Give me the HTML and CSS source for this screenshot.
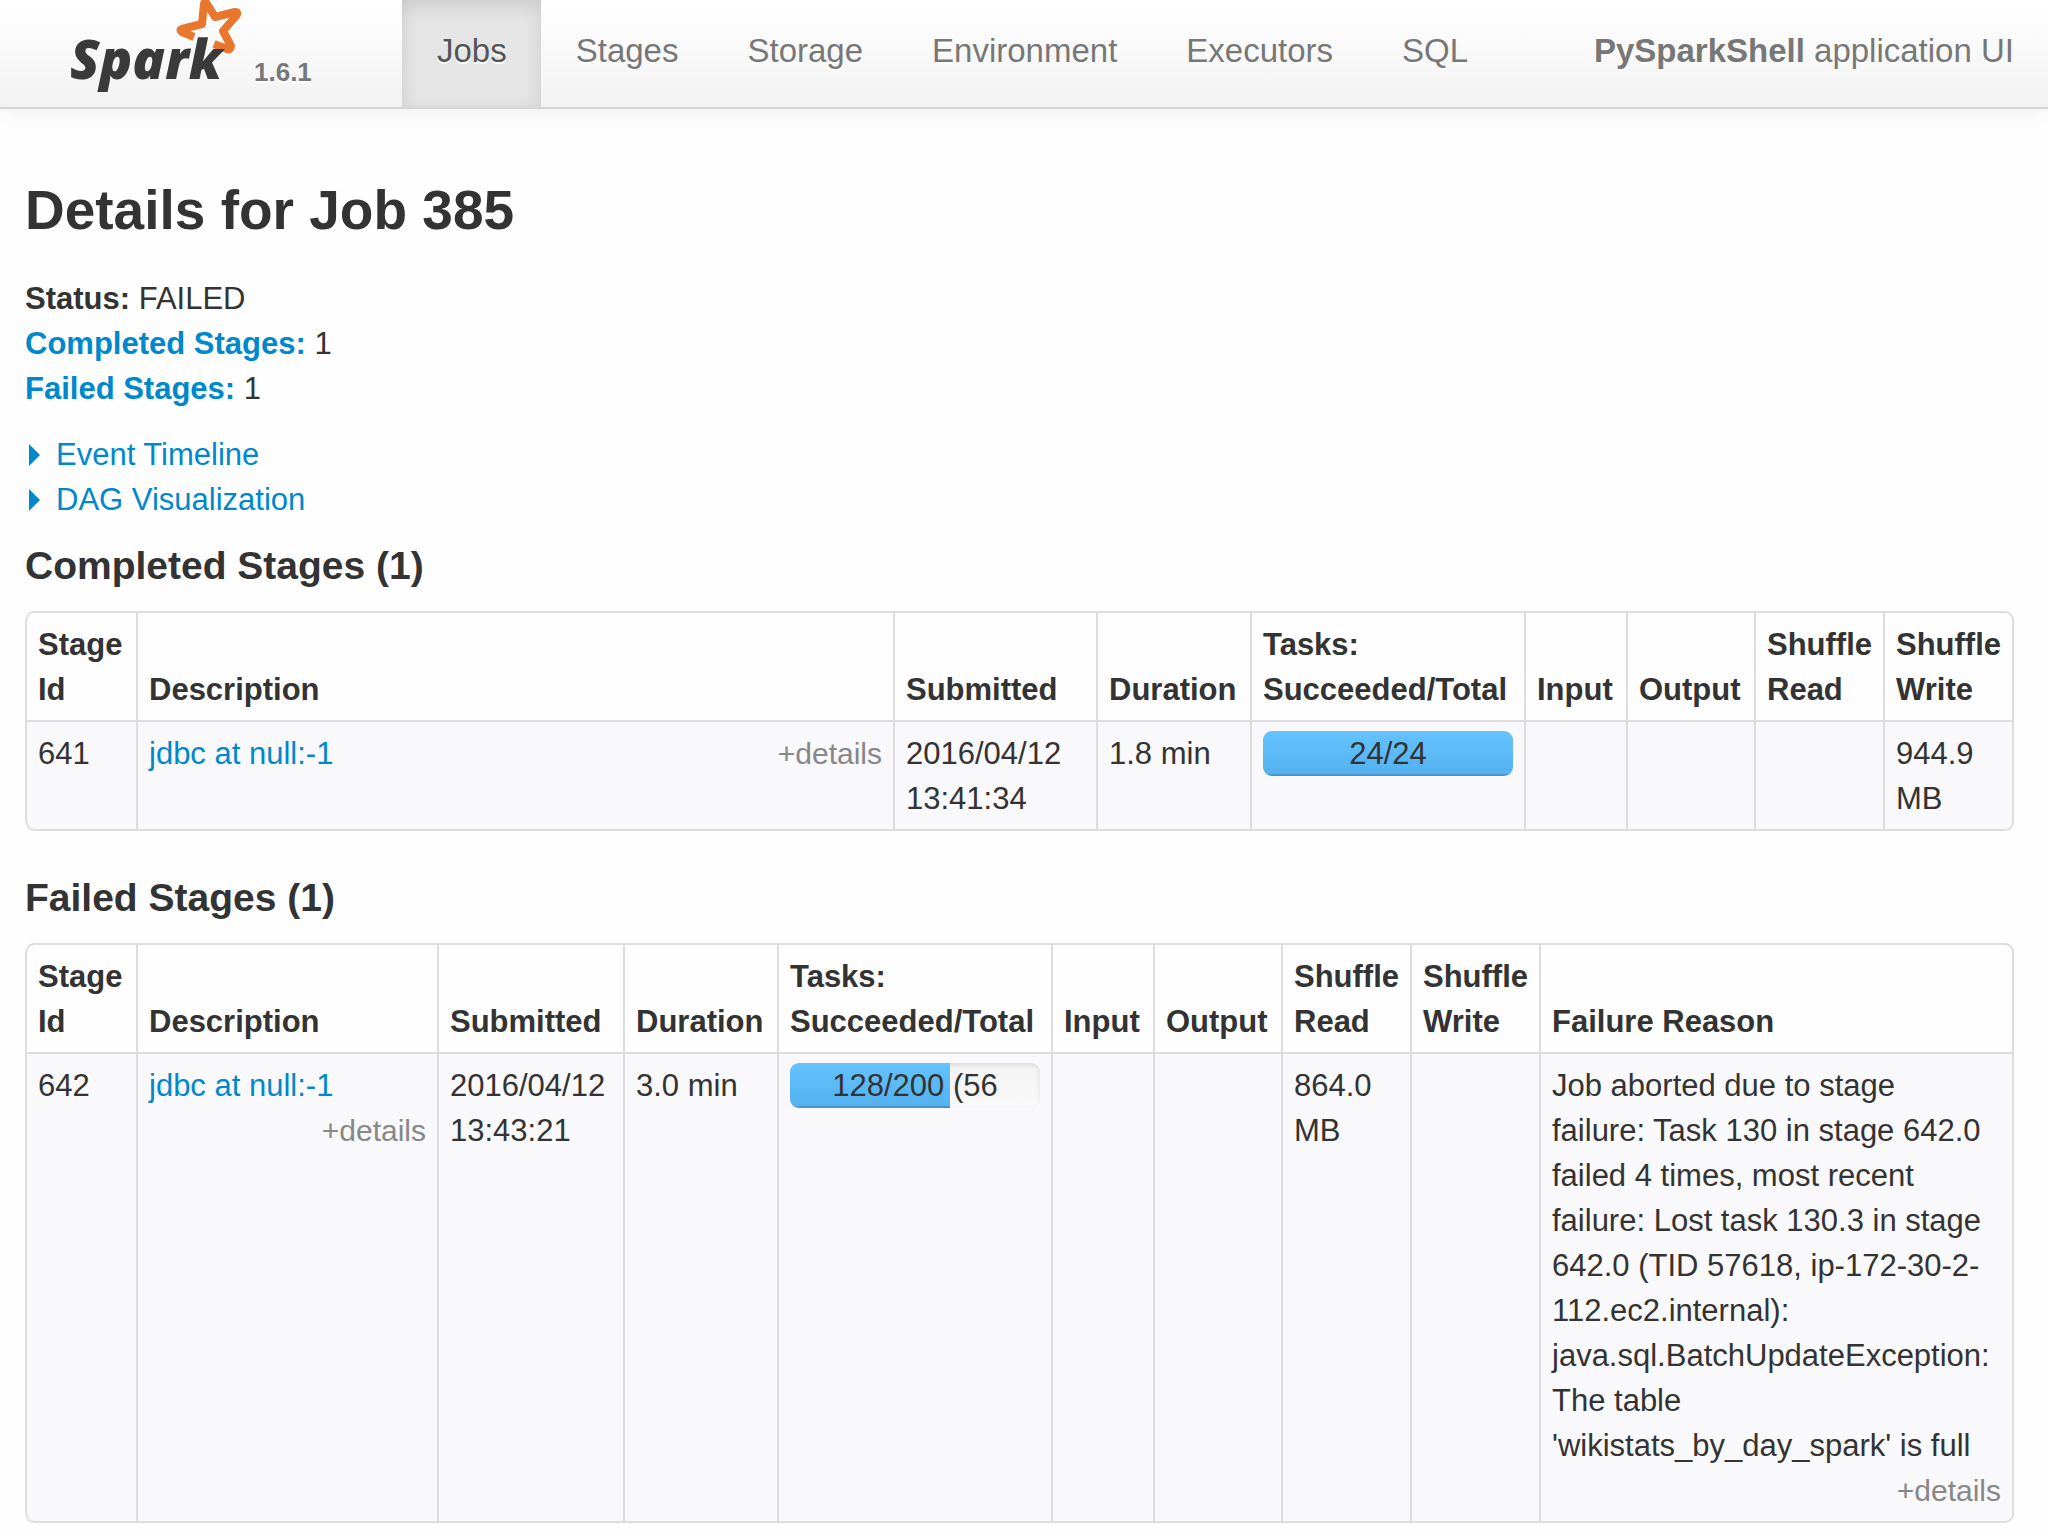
FILE: index.html
```
<!DOCTYPE html>
<html lang="en">
<head>
    <meta charset="UTF-8">
    <title>PySparkShell - Details for Job 385</title>
    <link rel="stylesheet" href="styles.css">
</head>
<body>

    <!-- Navbar -->
    <header class="navbar">
        <a class="brand" href="#">
            <svg class="logo" viewBox="0 0 180 108" role="img" aria-label="Spark">
                <path class="logo-star" d="M125 37 L113 32 Q110 30 113 29 L133 24 L135 4 Q136 1 138 4 L146 17 L166 12 Q170 12 167 16 L154 31 L162 46 Q162 50 158 49 L145 44"/>
                <text class="logo-text" x="1" y="79">Spark</text>
            </svg>
            <span class="version">1.6.1</span>
        </a>
        <nav class="nav">
            <a class="active" href="#jobs">Jobs</a>
            <a href="#stages">Stages</a>
            <a href="#storage">Storage</a>
            <a href="#environment">Environment</a>
            <a href="#executors">Executors</a>
            <a href="#sql">SQL</a>
        </nav>
        <p class="app-name"><strong>PySparkShell</strong> application UI</p>
    </header>

    <main class="container">
        <h1>Details for Job 385</h1>

        <ul class="summary">
            <li><strong>Status:</strong> FAILED</li>
            <li><a href="#completed"><strong>Completed Stages:</strong></a> 1</li>
            <li><a href="#failed"><strong>Failed Stages:</strong></a> 1</li>
        </ul>

        <div class="expanders">
            <a href="#timeline"><span class="arrow"></span>Event Timeline</a>
            <a href="#dag"><span class="arrow"></span>DAG Visualization</a>
        </div>

        <!-- Completed stages -->
        <h2 id="completed">Completed Stages (1)</h2>
        <table class="stages">
            <colgroup>
                <col class="col-id">
                <col>
                <col class="col-submitted-wide">
                <col class="col-duration">
                <col class="col-tasks">
                <col class="col-input">
                <col class="col-output">
                <col class="col-shuffle">
                <col class="col-shuffle">
            </colgroup>
            <thead>
                <tr>
                    <th>Stage Id</th>
                    <th>Description</th>
                    <th>Submitted</th>
                    <th>Duration</th>
                    <th>Tasks: Succeeded/Total</th>
                    <th>Input</th>
                    <th>Output</th>
                    <th>Shuffle Read</th>
                    <th>Shuffle Write</th>
                </tr>
            </thead>
            <tbody>
                <tr>
                    <td>641</td>
                    <td>
                        <div class="description">
                            <a href="#stage-641">jdbc at null:-1</a>
                            <button class="details" type="button">+details</button>
                        </div>
                    </td>
                    <td>2016/04/12 13:41:34</td>
                    <td>1.8 min</td>
                    <td>
                        <div class="progress">
                            <div class="bar" style="width: 100%"></div>
                            <span class="progress-text">24/24</span>
                        </div>
                    </td>
                    <td></td>
                    <td></td>
                    <td></td>
                    <td>944.9 MB</td>
                </tr>
            </tbody>
        </table>

        <!-- Failed stages -->
        <h2 id="failed">Failed Stages (1)</h2>
        <table class="stages">
            <colgroup>
                <col class="col-id">
                <col>
                <col class="col-submitted">
                <col class="col-duration">
                <col class="col-tasks">
                <col class="col-input">
                <col class="col-output">
                <col class="col-shuffle">
                <col class="col-shuffle">
                <col class="col-reason">
            </colgroup>
            <thead>
                <tr>
                    <th>Stage Id</th>
                    <th>Description</th>
                    <th>Submitted</th>
                    <th>Duration</th>
                    <th>Tasks: Succeeded/Total</th>
                    <th>Input</th>
                    <th>Output</th>
                    <th>Shuffle Read</th>
                    <th>Shuffle Write</th>
                    <th>Failure Reason</th>
                </tr>
            </thead>
            <tbody>
                <tr>
                    <td>642</td>
                    <td>
                        <div class="description">
                            <a href="#stage-642">jdbc at null:-1</a>
                            <button class="details" type="button">+details</button>
                        </div>
                    </td>
                    <td>2016/04/12 13:43:21</td>
                    <td>3.0 min</td>
                    <td>
                        <div class="progress">
                            <div class="bar" style="width: 64%"></div>
                            <span class="progress-text">128/200 (56</span>
                        </div>
                    </td>
                    <td></td>
                    <td></td>
                    <td>864.0 MB</td>
                    <td></td>
                    <td>
                        <div class="description">
                            <span class="reason">Job aborted due to stage failure: Task 130 in stage 642.0 failed 4 times, most recent failure: Lost task 130.3 in stage 642.0 (TID 57618, ip-172-30-2-<wbr>112.ec2.internal): java.sql.BatchUpdateException: The table 'wikistats_by_day_spark' is full</span>
                            <button class="details" type="button">+details</button>
                        </div>
                    </td>
                </tr>
            </tbody>
        </table>
    </main>

</body>
</html>
```
FILE: styles.css
```
* { box-sizing: border-box; }
body {
    margin: 0;
    background: #fefefe;
    color: #333;
    font-family: "Liberation Sans", Arial, sans-serif;
    font-size: 31px;
    line-height: 45px;
}
a { color: #08c; text-decoration: none; }

/* Navbar */
.navbar {
    display: flex;
    height: 109px;
    padding-right: 34px;
    background: linear-gradient(#fff, #f2f2f2);
    border-bottom: 2px solid #d4d4d4;
    box-shadow: 0 2px 20px rgba(0,0,0,0.07);
    color: #777;
    font-size: 33px;
    text-shadow: 0 2px 0 #fff;
}
.brand { display: flex; flex: none; width: 402px; padding-left: 69px; color: #777; }
.logo { flex: none; width: 180px; height: 108px; overflow: visible; }
.logo-text {
    fill: #3a3a3a;
    font-family: "Open Sans", sans-serif;
    font-size: 54px;
    font-weight: 800;
    font-style: italic;
    text-shadow: none;
}
.logo-star { fill: none; stroke: #e8762c; stroke-width: 8; stroke-linejoin: round; }
.version { padding-top: 50px; margin-left: 5px; font-size: 26px; font-weight: bold; }
.nav { display: flex; }
.nav a { padding: 28px 34px 0 35px; color: #777; }
.nav .active { background: #e5e5e5; color: #555; box-shadow: inset 0 6px 18px rgba(0,0,0,0.12); }
.app-name { margin: 0 0 0 auto; padding-top: 28px; white-space: nowrap; }

/* Content */
.container { padding: 56px 34px 15px 25px; }
h1, h2 { margin: 0; font-weight: bold; }
h1 { font-size: 55px; line-height: 90px; }
h2 { margin-bottom: 23px; font-size: 39px; line-height: 45px; }
.summary { margin: 21px 0; padding: 0; list-style: none; }
.expanders { display: flex; flex-direction: column; align-items: flex-start; margin-bottom: 21px; }
.expanders a { display: flex; align-items: center; }
.arrow {
    margin: 0 16px 0 4px;
    border-left: 11px solid #08c;
    border-top: 11px solid transparent;
    border-bottom: 11px solid transparent;
}

/* Stage tables */
.stages {
    width: 100%;
    margin-bottom: 44px;
    table-layout: fixed;
    border: 2px solid #ddd;
    border-left: 0;
    border-radius: 9px;
    border-collapse: separate;
    border-spacing: 0;
}
th, td { padding: 9px 11px 8px; border-left: 2px solid #ddd; text-align: left; }
th { vertical-align: bottom; }
th:first-child { border-top-left-radius: 9px; }
td { vertical-align: top; border-top: 2px solid #ddd; background: #f9f8fa; }
td:first-child { border-bottom-left-radius: 9px; }
td:last-child { border-bottom-right-radius: 9px; }
.col-id { width: 111px; }
.col-submitted-wide { width: 203px; }
.col-submitted { width: 186px; }
.col-duration { width: 154px; }
.col-tasks { width: 274px; }
.col-input { width: 102px; }
.col-output { width: 128px; }
.col-shuffle { width: 129px; }
.col-reason { width: 473px; }
.description { display: flex; flex-wrap: wrap; justify-content: space-between; }
.reason { max-width: 440px; }
.details {
    margin-left: auto;
    padding: 0;
    border: 0;
    background: none;
    color: #888;
    font: inherit;
    font-size: 30px;
    line-height: 45px;
    cursor: pointer;
}

/* Task progress */
.progress {
    position: relative;
    height: 45px;
    overflow: hidden;
    border-radius: 9px;
    background: linear-gradient(#f3f3f3, #f9f9f9);
    box-shadow: inset 0 2px 4px rgba(0,0,0,0.1);
}
.bar { height: 100%; background: linear-gradient(#64c4ff, #54b0ef); box-shadow: inset 0 -2px 0 rgba(0,0,0,0.15); }
.progress-text { position: absolute; inset: 0; text-align: center; }
```
